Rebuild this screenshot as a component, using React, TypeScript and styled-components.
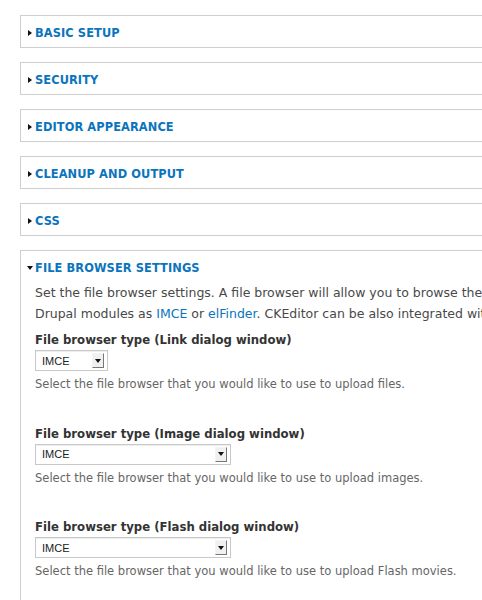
import React from "react";
import styled, { createGlobalStyle } from "styled-components";

const Global = createGlobalStyle`
  html, body { margin: 0; padding: 0; background: #fff; overflow: hidden; }
  body { font-family: "DejaVu Sans", Verdana, sans-serif; color: #494949; }
`;

const Page = styled.div`
  width: 560px;
  padding: 15px 0 0 20px;
  display: flex;
  flex-direction: column;
  gap: 14px;
`;

const Fieldset = styled.section<{ $open?: boolean }>`
  border: 1px solid #cfcfcf;
  ${(p) => (p.$open ? "border-bottom: none;" : "height: 31px;")}
  box-sizing: content-box;
`;

const Legend = styled.div`
  height: 31px;
  box-sizing: border-box;
  padding: 2px 0 0 7px;
  display: flex;
  align-items: center;
  gap: 3px;
`;

const Caret = styled.span<{ $open?: boolean }>`
  width: 0;
  height: 0;
  ${(p) =>
    p.$open
      ? `border-left: 3.5px solid transparent; border-right: 3.5px solid transparent; border-top: 4px solid #111; margin-left:-1px; margin-right:-1px;`
      : `border-top: 3.5px solid transparent; border-bottom: 3.5px solid transparent; border-left: 4px solid #111;`}
`;

const Title = styled.span`
  font-size: 11.4px;
  font-weight: bold;
  color: #0a74bd;
  letter-spacing: 0.1px;
`;

const Content = styled.div`
  padding: 0 0 0 14px;
  display: flex;
  flex-direction: column;
`;

const Intro = styled.p`
  margin: 0 0 8px;
  font-size: 12.5px;
  line-height: 21px;
  white-space: nowrap;
  color: #494949;
`;

const Link = styled.a`
  color: #0a74bd;
  text-decoration: none;
`;

const Item = styled.div`
  display: flex;
  flex-direction: column;
  align-items: flex-start;
  height: 93.5px;
`;

const Label = styled.label`
  font-size: 11.7px;
  font-weight: bold;
  color: #333;
  line-height: 16px;
  margin-bottom: 2px;
`;

const Select = styled.div<{ $w: number }>`
  width: ${(p) => p.$w}px;
  height: 21px;
  border: 1px solid #c8c8c8;
  box-shadow: inset 0 1px 0 #eee;
  display: flex;
  align-items: center;
  justify-content: space-between;
  padding: 0 3px 0 6px;
  box-sizing: border-box;
  background: #fff;
  margin-bottom: 6px;
`;

const Value = styled.span`
  font-family: "Liberation Sans", Arial, sans-serif;
  font-size: 11px;
  color: #222;
`;

const ArrowBtn = styled.span`
  width: 12px;
  height: 15px;
  box-sizing: border-box;
  border-right: 1px solid #777;
  border-bottom: 1px solid #777;
  border-top: 1px solid #f4f4f4;
  border-left: 1px solid #f4f4f4;
  background: #f0f0f0;
  display: flex;
  align-items: center;
  justify-content: center;
  &::after {
    content: "";
    border-left: 3px solid transparent;
    border-right: 3px solid transparent;
    border-top: 4px solid #111;
  }
`;

const Help = styled.div`
  font-size: 11.5px;
  color: #666;
  line-height: 14px;
`;

const collapsed = ["BASIC SETUP", "SECURITY", "EDITOR APPEARANCE", "CLEANUP AND OUTPUT", "CSS"];

const items = [
  { label: "File browser type (Link dialog window)", w: 73, help: "Select the file browser that you would like to use to upload files." },
  { label: "File browser type (Image dialog window)", w: 196, help: "Select the file browser that you would like to use to upload images." },
  { label: "File browser type (Flash dialog window)", w: 196, help: "Select the file browser that you would like to use to upload Flash movies." },
];

export default function App() {
  return (
    <>
      <Global />
      <Page>
        {collapsed.map((t) => (
          <Fieldset key={t}>
            <Legend>
              <Caret />
              <Title>{t}</Title>
            </Legend>
          </Fieldset>
        ))}
        <Fieldset $open>
          <Legend>
            <Caret $open />
            <Title>FILE BROWSER SETTINGS</Title>
          </Legend>
          <Content>
            <Intro>
              Set the file browser settings. A file browser will allow you to browse the files on the server.
              <br />
              Drupal modules as <Link href="#">IMCE</Link> or <Link href="#">elFinder</Link>. CKEditor can be also integrated with CKFinder.
            </Intro>
            {items.map((it) => (
              <Item key={it.label}>
                <Label>{it.label}</Label>
                <Select $w={it.w}>
                  <Value>IMCE</Value>
                  <ArrowBtn />
                </Select>
                <Help>{it.help}</Help>
              </Item>
            ))}
          </Content>
        </Fieldset>
      </Page>
    </>
  );
}
